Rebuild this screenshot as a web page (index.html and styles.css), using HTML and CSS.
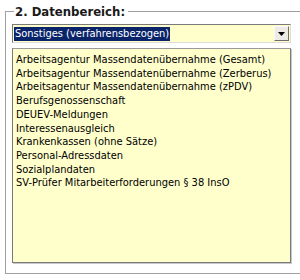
FILE: index.html
```html
<!DOCTYPE html>
<html lang="de">
<head>
    <meta charset="UTF-8">
    <title>Datenbereich</title>
    <link rel="stylesheet" href="styles.css">
</head>
<body>
    <fieldset class="group">
        <legend>2. Datenbereich:</legend>
        <div class="combo">
            <span class="combo-value">Sonstiges (verfahrensbezogen)</span>
            <span class="combo-btn">
                <svg width="7" height="4" viewBox="0 0 7 4"><path d="M0 0h7L3.5 4z" fill="#000"/></svg>
            </span>
        </div>
        <ul class="listbox">
            <li>Arbeitsagentur Massendatenübernahme (Gesamt)</li>
            <li>Arbeitsagentur Massendatenübernahme (Zerberus)</li>
            <li>Arbeitsagentur Massendatenübernahme (zPDV)</li>
            <li>Berufsgenossenschaft</li>
            <li>DEUEV-Meldungen</li>
            <li>Interessenausgleich</li>
            <li>Krankenkassen (ohne Sätze)</li>
            <li>Personal-Adressdaten</li>
            <li>Sozialplandaten</li>
            <li>SV-Prüfer Mitarbeiterforderungen § 38 InsO</li>
        </ul>
    </fieldset>
</body>
</html>
```

FILE: styles.css
```css
body {
    margin: 0;
    background: #fff;
    font-family: Tahoma, "DejaVu Sans Condensed", "Liberation Sans", sans-serif;
    font-size: 11px;
    color: #000;
    overflow: hidden;
}
.group {
    margin: 4px 0 0 5px;
    width: 300px;
    height: 270px;
    padding: 5px 6px 0 6px;
    border: 1px solid #a0a0a0;
    box-shadow: inset 1px 1px 0 #fff, 1px 1px 0 #fff;
    box-sizing: border-box;
}
.group legend {
    padding: 0 3px 0 1px;
    margin-left: 2px;
    font-weight: bold;
    font-size: 13px;
    color: #1a1a1a;
}
.combo {
    display: flex;
    align-items: center;
    width: 279px;
    height: 19px;
    box-sizing: border-box;
    border: 1px solid #7a7a7a;
    border-right-color: #dcdcdc;
    border-bottom-color: #dcdcdc;
    background: #ffffcc;
    padding: 1px;
}
.combo-value {
    background: #0a246a;
    color: #fff;
    padding: 0 1px;
    line-height: 14px;
}
.combo-btn {
    margin-left: auto;
    width: 15px;
    height: 15px;
    display: flex;
    align-items: center;
    justify-content: center;
    background: #ecebe6;
    border: 1px solid #f8f8f8;
    border-right-color: #6e6e6e;
    border-bottom-color: #6e6e6e;
    box-sizing: border-box;
}
.listbox {
    list-style: none;
    margin: 5px 0 0 0;
    padding: 4px 3px;
    width: 279px;
    height: 215px;
    box-sizing: border-box;
    background: #ffffcc;
    border: 1px solid #7a7a7a;
    border-top-color: #9a9a9a;
    box-shadow: 1px 1px 0 #c8c8c8;
}
.listbox li {
    line-height: 13.7px;
    white-space: nowrap;
}
```
